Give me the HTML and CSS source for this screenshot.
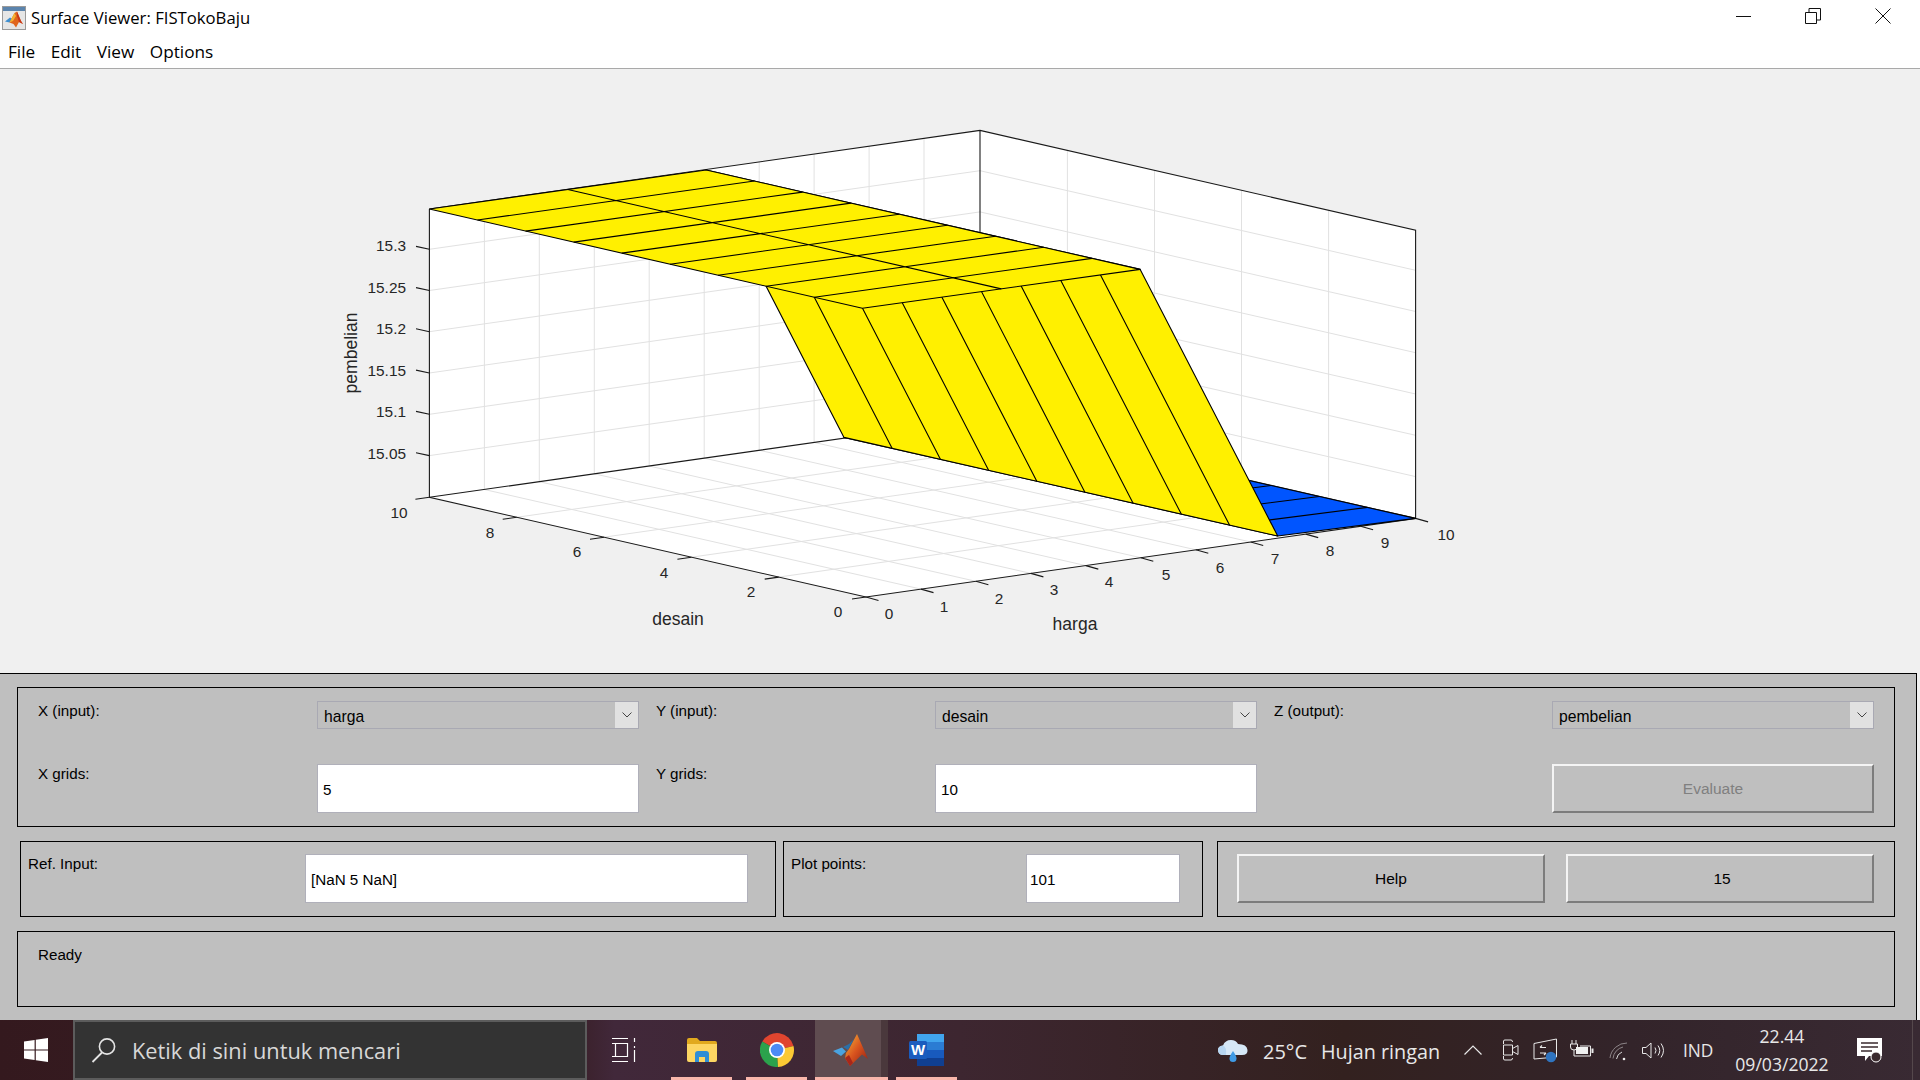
FILE: index.html
```html
<!DOCTYPE html>
<html lang="id">
<head>
<meta charset="utf-8">
<title>Surface Viewer: FISTokoBaju</title>
<link rel="stylesheet" href="styles.css">
</head>
<body>
<div class="app">
  <header class="titlebar">
    <svg class="appicon" viewBox="0 0 24 24" width="24" height="24">
      <rect x="0.5" y="0.5" width="23" height="23" fill="#e6e6e6" stroke="#9a9a9a"/>
      <rect x="1" y="1" width="22" height="4" fill="#5b84ad"/>
      <path d="M3 15.5 8 11.5 10.5 13 7.5 16.5Z" fill="#3f8fd0"/>
      <path d="M7.5 16.5 12.5 7 15 5.5 19 15 21 18 17 16 14 21.5 11.5 18Z" fill="#e0651c"/>
      <path d="M15 5.5 19 15 21 18 17 16 15 10Z" fill="#c7361a"/>
      <path d="M12.5 7 14 10 11 15 7.5 16.5Z" fill="#f2b233"/>
    </svg>
    <span class="title">Surface Viewer: FISTokoBaju</span>
    <div class="winbtns">
      <svg class="winbtn" viewBox="0 0 16 16" width="16" height="16"><path d="M1 8.5H16" stroke="#111" fill="none"/></svg>
      <svg class="winbtn" viewBox="0 0 16 16" width="16" height="16"><path d="M.5 4.500H11.500V15.500H.5ZM4 4V.5H15.500V12H12" stroke="#111" fill="none"/></svg>
      <svg class="winbtn" viewBox="0 0 16 16" width="16" height="16"><path d="M.5.5 15.500 15.500M15.500.5.5 15.500" stroke="#111" fill="none"/></svg>
    </div>
  </header>
  <nav class="menubar">
    <span class="menu">File</span><span class="menu">Edit</span><span class="menu">View</span><span class="menu">Options</span>
  </nav>
  <main class="plotarea">
    <svg class="plot" viewBox="0 69 1920 604" width="1920" height="604">
      <polygon class="wall" points="429.4,209 980,130.4 1415.6,230.2 1415.6,518.4 866,597 429.4,497.3"/>
      <g class="grid">
        <path d="M484.4 201.1V489.4M539.3 193.3V481.6M594.3 185.4V473.7M649.2 177.6V465.9M704.2 169.7V458M759.2 161.8V450.1M814.1 154V442.3M869.1 146.1V434.4M924 138.3V426.6"/>
        <path d="M1067.4 150.5V438.9M1154.5 170.5V458.9M1241.5 190.4V478.8M1328.6 210.4V498.8"/>
        <path d="M429.4 249.3 980 170.7 1415.6 270.3M429.4 290.5 980 211.9 1415.6 311.5M429.4 331.7 980 253.1 1415.6 352.7M429.4 373 980 294.4 1415.6 394M429.4 414.3 980 335.7 1415.6 435.3M429.4 455.6 980 377 1415.6 476.6"/>
        <path d="M921 589.1 484.4 489.5M975.9 581.3 539.3 481.7M1030.9 573.4 594.3 473.8M1085.8 565.6 649.2 466M1140.8 557.7 704.2 458.1M1195.8 549.8 759.2 450.2M1250.7 542 814.1 442.4M1305.7 534.1 869.1 434.5M1360.6 526.3 924 426.7"/>
        <path d="M778.7 577.1 1328.3 498.5M691.4 557.2 1241 478.6M604 537.2 1153.6 458.6M516.7 517.3 1066.3 438.7"/>
      </g>
      <g class="box">
        <path d="M429.4 209V497.3L866 597 1415.6 518.4V230.2L980 130.4 429.4 209"/>
        <path d="M980 130.4V418.8M429.4 497.3 980 418.8 1415.6 518.4"/>
        <path d="M429.4 249.3 416 246.4M429.4 290.5 416 287.6M429.4 331.7 416 328.8M429.4 373 416 370.1M429.4 414.3 416 411.4M429.4 455.6 416 452.7"/>
        <path d="M866 597 878.5 600.5M921 589.1 933.5 592.6M975.9 581.3 988.4 584.8M1030.9 573.4 1043.4 576.9M1085.8 565.6 1098.3 569.1M1140.8 557.7 1153.3 561.2M1195.8 549.8 1208.3 553.3M1250.7 542 1263.2 545.5M1305.7 534.1 1318.2 537.6M1360.6 526.3 1373.1 529.8M1415.6 518.4 1428.1 521.9"/>
        <path d="M866 597 852 599M778.7 577.1 764.7 579.1M691.4 557.2 677.4 559.2M604 537.2 590 539.2M516.7 517.3 502.7 519.3M429.4 497.3 415.4 499.3"/>
      </g>
      <g class="mesh">
        <polygon class="blue" points="1277.7,536 1415.6,518.4 981.9,419.8 844,437.4"/>
        <path d="M1229.5 525.1 1367.4 507.4M1181.3 514.1 1319.2 496.5M1133.1 503.2 1271 485.5"/>
        <polygon class="yellow" points="706.2,170 1140.2,269.4 1277.7,536 844,437.4"/>
        <path d="M754.4 181 892.2 448.4M802.6 192.1 940.4 459.3M850.9 203.1 988.6 470.3M899.1 214.2 1036.8 481.2M947.3 225.2 1084.9 492.2M995.5 236.3 1133.1 503.2M1043.7 247.3 1181.3 514.1M1092 258.4 1229.5 525.1"/>
        <polygon class="yellow" points="429.4,209 706.2,170 1140.2,269.4 862.4,308.3"/>
        <path d="M477.5 220 754.4 181M525.6 231.1 802.6 192.1M573.7 242.1 850.9 203.1M621.8 253.1 899.1 214.2M670 264.2 947.3 225.2M718.1 275.2 995.5 236.3M766.2 286.2 1043.7 247.3M814.3 297.3 1092 258.4M567.8 189.5 1001.3 288.9"/>
      </g>
      <g class="ticks end">
        <text x="406" y="245">15.3</text><text x="406" y="287">15.25</text><text x="406" y="328">15.2</text><text x="406" y="370">15.15</text><text x="406" y="411">15.1</text><text x="406" y="453">15.05</text>
      </g>
      <g class="ticks mid">
        <text x="889" y="613">0</text><text x="944" y="606">1</text><text x="999" y="598">2</text><text x="1054" y="589">3</text><text x="1109" y="581">4</text><text x="1166" y="574">5</text><text x="1220" y="567">6</text><text x="1275" y="558">7</text><text x="1330" y="550">8</text><text x="1385" y="542">9</text><text x="1446" y="534">10</text>
        <text x="838" y="611">0</text><text x="751" y="591">2</text><text x="664" y="572">4</text><text x="577" y="551">6</text><text x="490" y="532">8</text><text x="399" y="512">10</text>
      </g>
      <g class="axislabels">
        <text x="678" y="618.500">desain</text><text x="1075" y="624">harga</text>
        <text x="351" y="353" transform="rotate(-90 351 353)">pembelian</text>
      </g>
    </svg>
  </main>
  <section class="panel">
    <div class="group controls">
      <div class="pair"><span class="lbl">X (input):</span><div class="select"><span>harga</span><i class="arrow"><svg viewBox="0 0 10 6" width="10" height="6"><path d="M.5.5 5 5 9.500.5"/></svg></i></div></div>
      <div class="pair"><span class="lbl">Y (input):</span><div class="select"><span>desain</span><i class="arrow"><svg viewBox="0 0 10 6" width="10" height="6"><path d="M.5.5 5 5 9.500.5"/></svg></i></div></div>
      <div class="pair last"><span class="lbl">Z (output):</span><div class="select"><span>pembelian</span><i class="arrow"><svg viewBox="0 0 10 6" width="10" height="6"><path d="M.5.5 5 5 9.500.5"/></svg></i></div></div>
      <div class="pair"><span class="lbl">X grids:</span><div class="field">5</div></div>
      <div class="pair"><span class="lbl">Y grids:</span><div class="field">10</div></div>
      <div class="pair last"><span class="lbl"></span><div class="btn disabled">Evaluate</div></div>
    </div>
    <div class="midrow">
      <div class="group refgroup"><span class="lbl">Ref. Input:</span><div class="field">[NaN 5 NaN]</div></div>
      <div class="group plotgroup"><span class="lbl">Plot points:</span><div class="field tight">101</div></div>
      <div class="group btngroup"><div class="btn">Help</div><div class="btn num">15</div></div>
    </div>
    <div class="group status"><span class="lbl">Ready</span></div>
  </section>
  <footer class="taskbar">
    <div class="startbtn">
      <svg viewBox="0 0 24 24" width="24" height="24"><path d="M0 3.600 10.600 2V11.400H0ZM11.800 1.800 24 0V11.400H11.800ZM0 12.600H10.600V22L0 20.400ZM11.800 12.600H24V24L11.800 22.200Z" fill="#fff"/></svg>
    </div>
    <div class="search">
      <svg viewBox="0 0 26 26" width="26" height="26"><circle cx="16" cy="9.500" r="7.600" fill="none" stroke="#e4e4e4" stroke-width="1.600"/><path d="M11 15.500 1.500 25" stroke="#e4e4e4" stroke-width="1.800" fill="none"/></svg>
      <span>Ketik di sini untuk mencari</span>
    </div>
    <div class="slot s-view">
      <svg viewBox="0 0 25 24" width="25" height="24" fill="none" stroke="#fff"><path d="M0 .5H16M0 23.500H16M3.500 5.500H15.500V18.500H3.500ZM22.500 0V4M22.500 8V10M22.500 12V24M0 18.500H3M0 5.500H3" stroke-width="1.200"/></svg>
    </div>
    <div class="slot s-app">
      <svg viewBox="0 0 32 26" width="32" height="26"><path d="M1 3Q1 1 3 1H11L14 4H29Q31 4 31 6V8H1Z" fill="#e1a91e"/><path d="M1 7H31V23Q31 25 29 25H3Q1 25 1 23Z" fill="#fdd663"/><path d="M9 25V17Q9 14 12 14H20Q23 14 23 17V25H19V20H13V25Z" fill="#2f8ed6"/></svg>
    </div>
    <div class="slot s-app">
      <svg viewBox="-17 -17 34 34" width="34" height="34"><path d="M-14.700-8.500A17 17 0 0 1 16.500-4L0 0Z" fill="#e0452f"/><path d="M-14.700-8.500A17 17 0 0 0 1 17L0 0Z" fill="#2ba24c"/><path d="M16.500-4A17 17 0 0 1 1 17L0 0Z" fill="#fcc934"/><circle r="8" fill="#fff"/><circle r="6.300" fill="#4c8bf5"/></svg>
    </div>
    <div class="slot s-active">
      <svg viewBox="0 0 36 34" width="36" height="34"><defs><linearGradient id="mem" x1="0" y1="0" x2="1" y2="1"><stop offset="0" stop-color="#f5b83a"/><stop offset="0.500" stop-color="#d9541e"/><stop offset="1" stop-color="#8e1c12"/></linearGradient></defs><path d="M0 18 9 14.500 13 18.500 8 23Z" fill="#4aa3e0"/><path d="M10 14 16 11 21 6 15 17Z" fill="#2a6fa8"/><path d="M13 20 16 16 24 1 35 26 29 21.500 17 33 12 25Z" fill="url(#mem)"/><path d="M12 25 17 33 20 30 16 22Z" fill="#a8271a"/></svg>
    </div>
    <div class="slot s-word">
      <svg viewBox="0 0 35 32" width="35" height="32"><rect x="8" y="0" width="27" height="32" rx="2" fill="#2b7cd3"/><rect x="8" y="0" width="27" height="8" fill="#41a5ee"/><rect x="8" y="16" width="27" height="8" fill="#185abd"/><rect x="8" y="24" width="27" height="8" fill="#103f91"/><rect x="0" y="7" width="18" height="18" rx="1.500" fill="#1a5cbe"/><text class="wordw" x="9" y="21">W</text></svg>
    </div>
    <div class="tray">
      <svg class="t-cloud" viewBox="0 0 32 24" width="32" height="24"><path d="M7 17Q1 17 1 12 1 8 6 7.500 8 2 14 2 19 2 21 6 30 6 30.500 12 31 17 25 17Z" fill="#d6e8f7"/><path d="M6 17Q1 17 1 12 1 8 6 7.500 10 9 9 17Z" fill="#b7d6f1"/><path d="M16 13Q19.500 18 19.500 20.500A3.500 3.500 0 0 1 12.500 20.500Q12.500 18 16 13Z" fill="#3f9be6"/></svg>
      <span class="t-temp">25°C</span>
      <span class="t-wx">Hujan ringan</span>
      <svg class="t-caret" viewBox="0 0 18 10" width="18" height="10"><path d="M.5 9.500 9 1 17.500 9.500" fill="none" stroke="#e8e8e8" stroke-width="1.200"/></svg>
      <svg class="t-cam" viewBox="0 0 17 22" width="17" height="22" fill="none" stroke="#e8e8e8"><path d="M1.500 5V2Q1.500 1 3 1H9Q10.500 1 10.500 3M1.500 17V20Q1.500 21 3 21H9Q10.500 21 10.500 19"/><path d="M1.500 6H10.500V16H1.500ZM10.500 9.500 16 6.500V15.500L10.500 12.500"/></svg>
      <svg class="t-scr" viewBox="0 0 25 25" width="25" height="25" fill="none" stroke="#e8e8e8"><path d="M1 5.500 23.500 1V19L1 21Z"/><path d="M7 9.500H13M7 15H13M7 9.500 9 7.500M13 15 11 17" stroke-width="1.200"/><circle cx="18" cy="19" r="5.200" fill="#2f74c0" stroke="none"/></svg>
      <svg class="t-bat" viewBox="0 0 25 18" width="25" height="18" fill="none" stroke="#e8e8e8"><path d="M3 0V4M7 0V4M1.500 4H8.500V7Q8.500 10 5 10 1.500 10 1.500 7ZM5 10V16H21.500V6H11"/><rect x="7" y="7" width="12" height="7" fill="#f0f0f0" stroke="none"/><path d="M23.500 8.500V13" stroke-width="2"/></svg>
      <svg class="t-wifi" viewBox="0 0 20 19" width="20" height="19" fill="none" stroke="#8d8588"><path d="M1 16A17 17 0 0 1 18 1M4 16.500A13 13 0 0 1 14 5" /><path d="M7.500 17A9 9 0 0 1 13 10" stroke="#d8d8d8"/><circle cx="15" cy="17" r="1.300" fill="#eee" stroke="none"/></svg>
      <svg class="t-vol" viewBox="0 0 22 17" width="22" height="17" fill="none" stroke="#e8e8e8"><path d="M.5 5.500H4L9 1V16L4 11.500H.5ZM13 5.500Q15 8.500 13 11.500M16 3.500Q19.500 8.500 16 13.500M19 1.500Q24 8.500 19 15.500" stroke-width="1"/></svg>
      <span class="t-lang">IND</span>
      <div class="t-clock"><span>22.44</span><span>09/03/2022</span></div>
      <svg class="t-note" viewBox="0 0 25 25" width="25" height="25"><path d="M0 0H25V18H12L8 23V18H0Z" fill="#fff"/><path d="M4 5H21M4 9H21M4 13H15" stroke="#3a2a2e" stroke-width="1.300"/><circle cx="19" cy="19" r="5" fill="#3a2a2e" stroke="#fff"/></svg>
      <i class="t-edge"></i>
    </div>
  </footer>
</div>
</body>
</html>
```

FILE: styles.css
```css
* { box-sizing: border-box; }
html, body { margin: 0; padding: 0; }
body { width: 1920px; height: 1080px; overflow: hidden; background: #f0f0f0; font-family: "Liberation Sans", Arial, sans-serif; }
.app { width: 1920px; height: 1080px; display: flex; flex-direction: column; }

.titlebar { height: 34px; background: #fff; display: flex; align-items: center; padding-left: 2px; padding-top: 1px; }
.appicon { flex: none; }
.title { margin-left: 5px; font: 16.700px "Open Sans", sans-serif; color: #000; }
.winbtns { margin-left: auto; display: flex; gap: 54px; padding-right: 29px; margin-top: -3px; }
.winbtn { display: block; }
.menubar { height: 35px; background: #fff; border-bottom: 1px solid #a9a9a9; display: flex; align-items: center; padding-left: 8px; gap: 15.500px; font: 17.200px "Open Sans", sans-serif; color: #000; }

.plotarea { height: 604px; background: #f0f0f0; }
.plot { display: block; }
.wall { fill: #fff; }
.grid path { fill: none; stroke: #e1e1e1; stroke-width: 1; }
.box path { fill: none; stroke: #1a1a1a; stroke-width: 1.100; }
.mesh path, .mesh polygon { stroke: #000; stroke-width: 1.100; fill: none; stroke-linejoin: round; }
.mesh .yellow { fill: #fff000; }
.mesh .blue { fill: #0055ff; }
.ticks text, .axislabels text { font-family: "Liberation Sans", Arial, sans-serif; fill: #262626; dominant-baseline: central; }
.ticks text { font-size: 15.400px; }
.ticks.end text { text-anchor: end; }
.ticks.mid text { text-anchor: middle; }
.axislabels text { font-size: 17.500px; text-anchor: middle; }

.panel { height: 347px; width: 1917px; background: #bfbfbf; border-top: 1px solid #000; border-right: 1px solid #000; padding: 13px 21px 0 17px; display: flex; flex-direction: column; gap: 14px; font-size: 15.200px; color: #000; }
.group { border: 1px solid #000; }
.controls { height: 140px; padding: 13px 20px; display: grid; grid-template-columns: 601px 601px 600px; grid-template-rows: 28px 49px; column-gap: 17px; row-gap: 35px; }
.pair { display: grid; grid-template-columns: 279px 322px; }
.pair.last { grid-template-columns: 278px 322px; }
.lbl { line-height: 20px; }
.select { border: 1px solid #a9a9b3; display: flex; align-items: center; justify-content: space-between; padding-left: 6px; font-size: 15.700px; }
.select span { padding-top: 3px; }
.arrow { width: 23px; height: 100%; background: #e1e1e1; display: flex; align-items: center; justify-content: center; }
.arrow svg { display: block; fill: none; stroke: #444; }
.field { background: #fff; border: 1px solid #b0b0ba; display: flex; align-items: center; padding-left: 5px; height: 49px; padding-top: 1px; }
.field.tight { padding-left: 3px; }
.btn { height: 49px; border: 2px solid; border-color: #f4f4f4 #7c7c7c #7c7c7c #f4f4f4; display: flex; align-items: center; justify-content: center; padding-top: 1px; font-size: 15.500px; }
.btn.num { padding-left: 4px; }
.btn.disabled { color: #808080; }

.midrow { display: flex; margin-left: 3px; height: 76px; }
.midrow .group { height: 76px; padding: 12px 0 0; display: grid; }
.refgroup { width: 756px; padding-left: 7px !important; grid-template-columns: 277px 443px; }
.plotgroup { width: 420px; margin-left: 7px; padding-left: 7px !important; grid-template-columns: 235px 154px; }
.btngroup { width: 678px; margin-left: 14px; padding-left: 19px !important; grid-template-columns: 308px 308px; column-gap: 21px; }
.status { height: 76px; padding: 13px 20px; }

.taskbar { height: 60px; background: linear-gradient(90deg, #34191e 0, #3a2029 30%, #41283a 32%, #3d2630 50%, #33211f 70%, #33242a 85%, #392a33 100%); display: flex; align-items: stretch; color: #e8e8e8; font-family: "Open Sans", sans-serif; }
.startbtn { width: 73px; flex: none; display: flex; align-items: center; padding-left: 24px; }
.startbtn svg { display: block; }
.search { width: 514px; flex: none; background: #333; border: 2px solid #5c5c5c; display: flex; align-items: center; padding-left: 16px; font-size: 21.800px; color: #d8d8d8; gap: 15px; }
.search svg { flex: none; }
.slot { flex: none; display: flex; align-items: center; justify-content: center; position: relative; }
.s-view { width: 84px; justify-content: flex-start; padding-left: 25px; }
.s-app { width: 61px; margin-right: 14px; box-shadow: inset 0 -3px 0 #f9b6ab; }
.s-app + .s-active { margin-left: -6px; }
.s-active { width: 73px; margin-right: 8px; background: linear-gradient(90deg, #5f4c50 0, #5f4c50 66px, #4a383c 66px, #4a383c 100%); box-shadow: inset 0 -3px 0 #f9b6ab; padding-right: 1px; }
.s-word { width: 61px; box-shadow: inset 0 -3px 0 #f9b6ab; }
.wordw { font: bold 15px "Liberation Sans", sans-serif; fill: #fff; text-anchor: middle; }
.tray { position: relative; flex: 1; }
.tray > * { position: absolute; }
.t-cloud { left: 260px; top: 18px; }
.t-temp { left: 306px; top: 19px; font-size: 20px; line-height: 26px; }
.t-wx { left: 364px; top: 19px; font-size: 19.800px; line-height: 26px; white-space: nowrap; }
.t-caret { left: 507px; top: 25px; }
.t-cam { left: 545px; top: 19px; }
.t-scr { left: 576px; top: 18px; }
.t-bat { left: 612px; top: 20px; }
.t-wifi { left: 652px; top: 22px; }
.t-vol { left: 685px; top: 22px; }
.t-lang { left: 726px; top: 20px; font-size: 17.300px; line-height: 22px; }
.t-clock { left: 770px; top: 2px; width: 110px; display: flex; flex-direction: column; align-items: center; font-size: 17.600px; line-height: 28px; }
.t-note { left: 900px; top: 18px; }
.t-edge { left: 955px; top: 0; width: 1px; height: 60px; background: #55484c; }
```
